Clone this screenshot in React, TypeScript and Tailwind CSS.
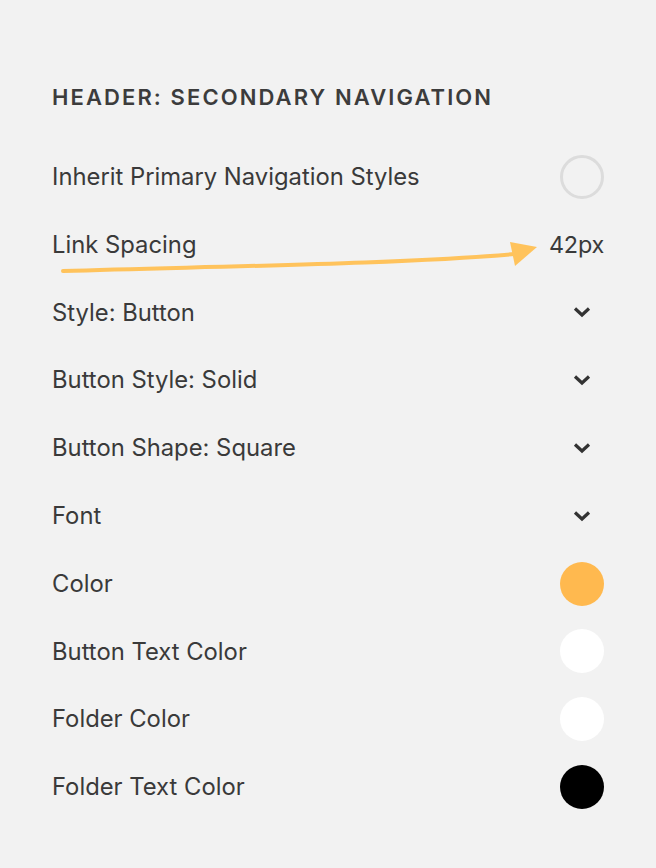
import React from 'react';

type Row =
  | { label: string; kind: 'toggle' }
  | { label: string; kind: 'value'; value: string }
  | { label: string; kind: 'select' }
  | { label: string; kind: 'color'; color: string };

const rows: Row[] = [
  { label: 'Inherit Primary Navigation Styles', kind: 'toggle' },
  { label: 'Link Spacing', kind: 'value', value: '42px' },
  { label: 'Style: Button', kind: 'select' },
  { label: 'Button Style: Solid', kind: 'select' },
  { label: 'Button Shape: Square', kind: 'select' },
  { label: 'Font', kind: 'select' },
  { label: 'Color', kind: 'color', color: 'bg-[#ffb94f]' },
  { label: 'Button Text Color', kind: 'color', color: 'bg-white' },
  { label: 'Folder Color', kind: 'color', color: 'bg-white' },
  { label: 'Folder Text Color', kind: 'color', color: 'bg-black' },
];

const Chevron = () => (
  <svg width="20" height="12" viewBox="0 0 20 12" className="mr-[12px]">
    <path d="M3 2.5 L10 9 L17 2.5" fill="none" stroke="#333" strokeWidth="3.2" />
  </svg>
);

const Control: React.FC<{ row: Row }> = ({ row }) => {
  switch (row.kind) {
    case 'toggle':
      return <div className="w-[44px] h-[44px] rounded-full border-[3px] border-[#dcdcdc]" />;
    case 'value':
      return <span className="text-[23.4px] tracking-[-0.01em]">{row.value}</span>;
    case 'select':
      return <Chevron />;
    case 'color':
      return <div className={`w-[44px] h-[44px] rounded-full ${row.color}`} />;
  }
};

export default function App() {
  return (
    <div className="relative w-[656px] h-[868px] bg-[#f2f2f2] font-['Inter',sans-serif] text-[#3a3a3a]">
      <div className="px-[52px] pt-[83px]">
        <h2 className="text-[22px] font-semibold tracking-[0.095em] leading-[28px] text-[#3c3c3c] mb-[32px]">
          HEADER: SECONDARY NAVIGATION
        </h2>
        <div className="flex flex-col">
          {rows.map((row) => (
            <div key={row.label} className="h-[67.8px] flex items-center justify-between">
              <span className="text-[23.8px]">{row.label}</span>
              <Control row={row} />
            </div>
          ))}
        </div>
      </div>
      <svg className="absolute left-0 top-0 pointer-events-none" width="656" height="868">
        <path d="M63 271 C 230 266, 400 264, 515 254" fill="none" stroke="#ffc35c" strokeWidth="4" strokeLinecap="round" />
        <path d="M510 242 L537 247 L515 266 Z" fill="#ffc35c" />
      </svg>
    </div>
  );
}
